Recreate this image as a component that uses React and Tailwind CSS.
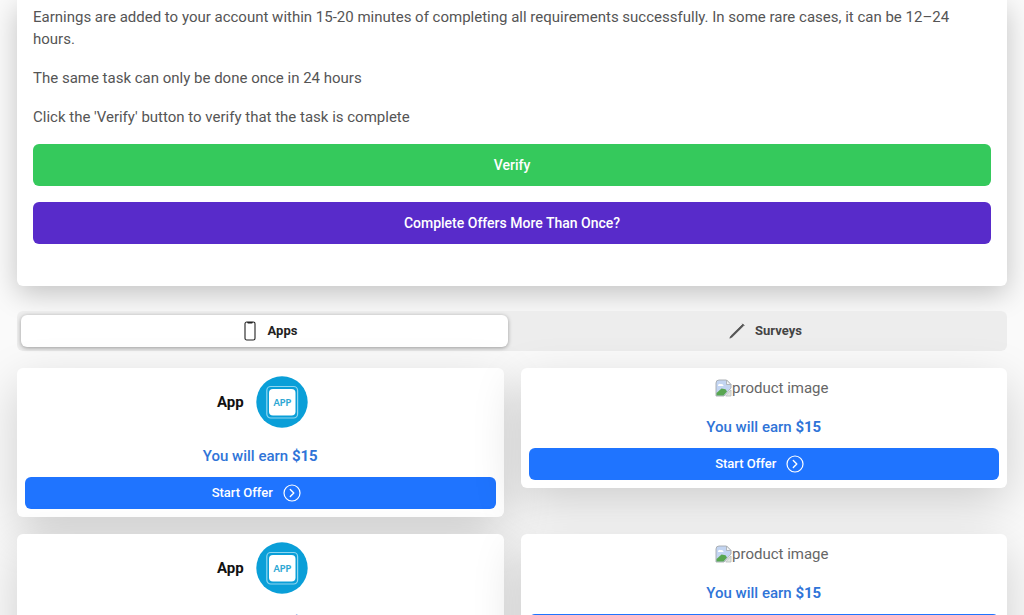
import React from "react";

const PhoneIcon = () => (
  <svg viewBox="0 0 12 20" className="w-3 h-5" fill="none" aria-hidden="true">
    <rect x="1" y="1" width="10" height="18" rx="1.8" stroke="#222" strokeWidth="1.1" />
    <path d="M3 1h6l-.8 1.6H3.800z" fill="#222" />
  </svg>
);

const PencilIcon = () => (
  <svg viewBox="0 0 16 16" className="w-4 h-4" fill="none" aria-hidden="true">
    <path d="M.8 15.200 1.800 13 13.400 1.600l1.200 1.100L3.200 14z" fill="#555" stroke="#444" strokeWidth=".6" />
    <path d="M13.400.8 15.200 2.600" stroke="#333" strokeWidth="1" />
  </svg>
);

const ArrowIcon = () => (
  <svg viewBox="0 0 18 18" className="w-[18px] h-[18px]" fill="none" stroke="currentColor" aria-hidden="true">
    <circle cx="9" cy="9" r="8" strokeWidth="1.2" />
    <path d="M7.300 5.500 10.800 9l-3.500 3.500" strokeWidth="1.4" strokeLinecap="round" strokeLinejoin="round" />
  </svg>
);

const AppLogo = () => (
  <svg viewBox="0 0 52 52" className="w-[52px] h-[52px]" role="img" aria-label="App logo">
    <circle cx="26" cy="26" r="25.700" fill="#0a9fd8" />
    <rect x="10.800" y="10.500" width="30.800" height="31.500" rx="4" fill="none" stroke="#8fd6f0" strokeWidth="1.200" />
    <rect x="13" y="13" width="26.500" height="26.500" rx="4" fill="#fff" />
    <text
      x="26.300"
      y="29.500"
      textAnchor="middle"
      fontFamily="Lato, sans-serif"
      fontSize="9"
      fontWeight="900"
      fill="#2fa8d4"
    >
      APP
    </text>
  </svg>
);

const MissingImage = () => (
  <div className="flex items-center justify-center h-[23px] pl-4 text-[#666]">
    <svg viewBox="0 0 17 18" className="w-[17px] h-[18px]" aria-hidden="true">
      <path d="M4 1h7.500l4.500 4.500V9L9 17H1V4a3 3 0 0 1 3-3z" fill="#c3d5f2" stroke="#a5a9ae" strokeWidth=".9" />
      <path d="M11.500 1v4.500H16z" fill="#f4f5f7" stroke="#a5a9ae" strokeWidth=".8" />
      <path d="M3 6.500a1.800 1.800 0 0 1 3-1.200 1.700 1.700 0 0 1 2.500 1.700H3z" fill="#fff" />
      <path d="M1.500 16.500V14l5-4.500 4 .8 1.500 2.200-3.500 4z" fill="#58a650" />
      <path d="M16 11v6h-5.300z" fill="#dfe8e0" stroke="#b5b9bd" strokeWidth=".8" />
    </svg>
    <span>product image</span>
  </div>
);

const offers = [
  { id: 1, name: "App", reward: "$15" },
  { id: 2, name: null, reward: "$15" },
  { id: 3, name: "App", reward: "$15" },
  { id: 4, name: null, reward: "$15" },
];

const OfferCard = ({ offer }) => (
  <article className="bg-white rounded-md p-2 text-center shadow-[0_16px_48px_rgba(0,0,0,0.175)]">
    {offer.name ? (
      <div className="flex items-center justify-center gap-3 pl-1">
        <h2 className="font-bold text-[#111]">{offer.name}</h2>
        <AppLogo />
      </div>
    ) : (
      <MissingImage />
    )}
    <p className="mt-[17px] mb-[10px] font-medium text-[#2f74d8]">
      You will earn <strong className="font-bold">{offer.reward}</strong>
    </p>
    <a
      href="#"
      className="flex items-center justify-center gap-[10px] h-8 pr-2 rounded-md bg-[#1f74ff] text-[13px] font-medium text-white"
    >
      Start Offer
      <ArrowIcon />
    </a>
  </article>
);

const App = () => {
  return (
    <main className="h-screen overflow-hidden bg-[#fafafa] px-[17px] font-[Roboto,sans-serif] text-[15px] leading-[22px] text-[#555]">
      {/* Instructions */}
      <section className="bg-white rounded-b-md px-4 pt-[6px] pb-[42px] shadow-[0_8px_28px_rgba(0,0,0,0.22)]">
        <p className="mb-[17px]">
          Earnings are added to your account within 15-20 minutes of completing
          all requirements successfully. In some rare cases, it can be 12–24
          hours.
        </p>
        <p className="mb-[17px]">The same task can only be done once in 24 hours</p>
        <p className="mb-4">
          Click the 'Verify' button to verify that the task is complete
        </p>
        <button
          type="button"
          className="block w-full h-[42px] mb-4 rounded-md bg-[#35c95c] text-sm font-medium text-white"
        >
          Verify
        </button>
        <button
          type="button"
          className="block w-full h-[42px] rounded-md bg-[#582bca] text-sm font-medium text-white"
        >
          Complete Offers More Than Once?
        </button>
      </section>

      {/* Tabs */}
      <div
        role="tablist"
        className="grid grid-cols-2 gap-2 h-10 mt-[25px] mb-[17px] p-1 rounded-md bg-[#ededed] text-[13px] font-bold"
      >
        <button
          type="button"
          role="tab"
          aria-selected="true"
          className="flex items-center justify-center gap-3 pl-3 rounded-md bg-white text-[#222] shadow-[0_1px_4px_rgba(0,0,0,0.35)]"
        >
          <PhoneIcon />
          Apps
        </button>
        <button
          type="button"
          role="tab"
          aria-selected="false"
          className="flex items-center justify-center gap-[10px] pl-3 rounded-md text-[#444]"
        >
          <PencilIcon />
          Surveys
        </button>
      </div>

      {/* Offers */}
      <div className="grid grid-cols-2 items-start gap-[17px]">
        {offers.map((offer) => (
          <OfferCard key={offer.id} offer={offer} />
        ))}
      </div>
    </main>
  );
};

export default App;
